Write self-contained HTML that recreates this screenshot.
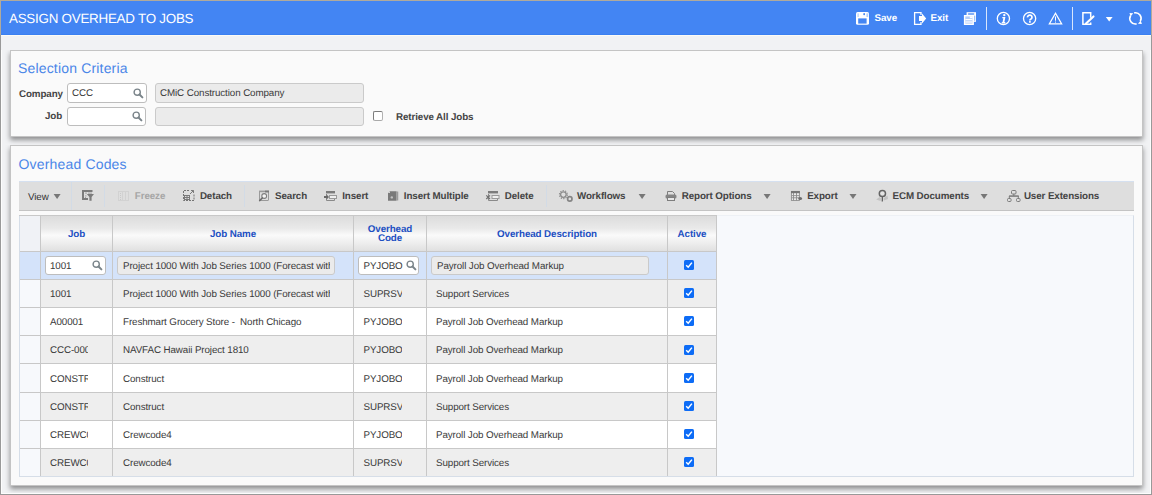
<!DOCTYPE html><html><head><meta charset="utf-8"><style>
*{box-sizing:border-box;margin:0;padding:0}
html,body{width:1152px;height:495px;overflow:hidden}
body{position:relative;background:#f1f2f4;font-family:"Liberation Sans",sans-serif;color:#333;text-rendering:geometricPrecision}
div,span{position:absolute}
.t{white-space:pre;font-size:9.8px;line-height:12px;letter-spacing:-0.1px;color:#3a3a3a}
.b{font-weight:bold;color:#444}
.dis{color:#a6a6a6}
.panel{background:#fafafa;border:1px solid #c4c4c4;box-shadow:0 3px 5px rgba(0,0,0,.42);clip-path:inset(0 -12px -12px -12px)}
.ptitle{white-space:pre;font-size:14px;line-height:16px;color:#4a86e8;letter-spacing:0.17px}
.inp{background:#fff;border:1px solid #bdbdbd;border-radius:3px;overflow:hidden}
.ro{background:#ebebeb;border:1px solid #cacaca;border-radius:3px;overflow:hidden}
.gh{white-space:pre;font-size:9.8px;line-height:10px;font-weight:bold;color:#1d50c2;letter-spacing:-0.1px;text-align:center}
svg{position:absolute;overflow:visible}
.cell{overflow:hidden}
</style></head><body>
<div style="left:0;top:0;width:1152px;height:35px;background:#4385f3;border-bottom:1px solid #3b80f1"></div>
<div style="left:0;top:35px;width:1152px;height:1px;background:#fcfbf6"></div>
<span style="left:9px;top:11px;white-space:pre;font-size:13.4px;line-height:15px;color:#fff;letter-spacing:-0.25px">ASSIGN OVERHEAD TO JOBS</span>
<svg style="left:0;top:0" width="1152" height="35">
<g fill="none" stroke="#ffffff" stroke-width="1.3">
 <!-- exit -->
 <path d="M921 15 V12.6 H914.6 V24.4 H921 V22"/>
 <!-- copy -->
 <rect x="966.6" y="12.2" width="9.4" height="9.6" fill="#ffffff" stroke="none"/>
 <rect x="967.8" y="13.2" width="6.6" height="1.6" rx="0.8" fill="#5d95f4" stroke="none"/>
 <rect x="974.3" y="15.6" width="0.9" height="5.2" fill="#7aa8f6" stroke="none"/>
 <rect x="964.6" y="15.7" width="8.6" height="8.6" fill="#b3cdf9" stroke-width="1.4"/>
 <rect x="969.8" y="16.3" width="2.8" height="1.9" fill="#ffffff" stroke="none"/>
 <line x1="965.4" y1="19.6" x2="972.4" y2="19.6" stroke-width="1.2"/><line x1="965.4" y1="22" x2="972.4" y2="22" stroke-width="1.2"/>
 <!-- info -->
 <circle cx="1003.4" cy="18.5" r="6.1"/>
 <!-- help -->
 <circle cx="1029.6" cy="18.5" r="6.1"/>
 <!-- warning -->
 <path d="M1055.5 13.2 L1061.6 23.8 H1049.4 Z" stroke-linejoin="miter"/>
 <!-- edit -->
 <path d="M1090.7 17.8 V12.7 H1082.9 V24.3 H1090.7 V22.6" stroke-width="1.5"/>
 <path d="M1086 23.6 L1093.5 16.4" stroke-width="2.1" stroke-linecap="round"/>
 <!-- refresh -->
 <path d="M1134.2 12.9 A5.6 5.6 0 0 1 1140.3 21.2 M1136.6 23.9 A5.6 5.6 0 0 1 1130.6 15.6" stroke-width="1.6"/>
</g>
<g fill="#ffffff">
 <rect x="856" y="12.1" width="13" height="12.7" rx="1.6"/>
 <rect x="858.2" y="18.4" width="8.4" height="5.2" fill="#4385f3"/>
 <rect x="857.5" y="13.4" width="1.2" height="3.6" fill="#b4cff9"/>
 <rect x="866.4" y="13.4" width="1.8" height="3.6" fill="#b4cff9"/>
 <rect x="863.3" y="13.1" width="1.7" height="2.2" rx="0.8" fill="#4385f3"/>
 <path d="M919 16 H922 V13.5 L926.2 18.5 L922 23.5 V21 H919 Z"/>
 <path d="M1105.8 17 H1112.6 L1109.2 21.5 Z"/>
 <circle cx="1004.3" cy="15.1" r="1.2"/><path d="M1002.4 17 H1005.4 L1004.4 22.1 H1005.4 L1005.1 23.5 H1001.5 L1001.8 22.2 L1002.6 22.1 L1003.3 18.3 H1002.2 Z"/>
 <path d="M1027.5 17.4 A2.25 2.2 0 1 1 1031 19.1 Q1029.9 19.7 1029.9 20.4" fill="none" stroke="#ffffff" stroke-width="1.75"/><rect x="1029" y="21.1" width="1.8" height="1.6"/>
 <rect x="1055" y="16.5" width="1" height="4.2"/><rect x="1055" y="21.6" width="1" height="1"/>
 <path d="M1129.5 13 L1133.2 13.2 L1130.6 16.4 Z"/>
 <path d="M1141.9 24 L1138 23.8 L1140.7 20.6 Z"/>
</g>
<rect x="986" y="7" width="1" height="23" fill="#d9e6fc"/>
<rect x="1072" y="7" width="1" height="23" fill="#d9e6fc"/>
</svg>
<span class="t b" style="left:874.5px;top:13px;color:#fff">Save</span>
<span class="t b" style="left:930.5px;top:13px;color:#fff">Exit</span>
<div class="panel" style="left:10px;top:50px;width:1133px;height:87px"></div>
<span class="ptitle" style="left:18px;top:60px">Selection Criteria</span>
<span class="t b" style="left:19px;top:89px;">Company</span>
<span class="t b" style="left:45px;top:111px;">Job</span>
<div class="inp" style="left:67px;top:83px;width:80px;height:20px"></div>
<span class="t" style="left:72px;top:88px;">CCC</span>
<svg style="left:132.5px;top:88px" width="11" height="11" viewBox="0 0 11 11"><circle cx="4.2" cy="4.2" r="3.1" fill="none" stroke="#7a848a" stroke-width="1.4"/><path d="M6.5 6.5 L9.4 9.4" stroke="#7a848a" stroke-width="2" stroke-linecap="round"/></svg>
<div class="inp" style="left:67px;top:107px;width:79px;height:19px"></div>
<svg style="left:131.5px;top:111px" width="11" height="11" viewBox="0 0 11 11"><circle cx="4.2" cy="4.2" r="3.1" fill="none" stroke="#7a848a" stroke-width="1.4"/><path d="M6.5 6.5 L9.4 9.4" stroke="#7a848a" stroke-width="2" stroke-linecap="round"/></svg>
<div class="ro" style="left:155px;top:83px;width:209px;height:20px"></div>
<span class="t" style="left:160px;top:88px;">CMiC Construction Company</span>
<div class="ro" style="left:155px;top:107px;width:209px;height:19px"></div>
<div style="left:373px;top:111px;width:10px;height:10px;border:1px solid #7c7c7c;border-right-color:#b2b2b2;border-bottom-color:#aaaaaa;border-radius:2px;background:#fff"></div>
<span class="t b" style="left:396px;top:112px;">Retrieve All Jobs</span>
<div class="panel" style="left:10px;top:145px;width:1133px;height:341px"></div>
<span class="ptitle" style="left:18.5px;top:156px">Overhead Codes</span>
<div style="left:19px;top:181px;width:1115px;height:30px;background:#dedede;border-top:1px solid #d5e0f0;border-bottom:1px solid #c4c4c4"></div>
<div style="left:71px;top:182px;width:1px;height:28px;background:#d2dbe6"></div>
<div style="left:104px;top:185px;width:1px;height:22px;background:#d2dbe6"></div>
<div style="left:244px;top:185px;width:1px;height:22px;background:#d2dbe6"></div>
<div style="left:546px;top:185px;width:1px;height:22px;background:#d2dbe6"></div>
<span class="t" style="left:28px;top:192px;color:#333">View</span>
<svg style="left:0;top:0" width="1152" height="495">
<path d="M53.6 194 H60.6 L57.1 199 Z" fill="#777"/><path d="M638.6 194 H645.6 L642.1 199 Z" fill="#777"/><path d="M763.6 194 H770.6 L767.1 199 Z" fill="#777"/><path d="M849.5 194 H856.5 L853.0 199 Z" fill="#777"/><path d="M980.6 194 H987.6 L984.1 199 Z" fill="#777"/>
<!-- filter -->
<g fill="#7c7c7c"><rect x="82" y="190" width="10.5" height="2"/><rect x="82" y="190" width="2" height="10"/><rect x="82" y="198" width="6" height="2"/>
<path d="M86.8 194 H94 L91.6 197 V200.8 H89.4 V197 Z"/></g>
<g fill="#a2a2a2"><rect x="85" y="192.6" width="2" height="1"/><rect x="88" y="192.6" width="4" height="1"/><rect x="85" y="195.4" width="1.5" height="1"/><rect x="85" y="197" width="1" height="1"/></g>
<!-- freeze (disabled) -->
<g fill="none" stroke="#d2d2d2" stroke-width="1"><rect x="118.5" y="191.5" width="10" height="9"/><line x1="122.5" y1="192" x2="122.5" y2="200"/><line x1="125.5" y1="192" x2="125.5" y2="200"/></g>
<g fill="none" stroke="#cacaca" stroke-width="1" stroke-dasharray="1 1"><line x1="120.5" y1="193" x2="120.5" y2="200"/></g>
<!-- detach -->
<g fill="none" stroke="#757575" stroke-width="1" stroke-dasharray="2 1"><path d="M183.5 193 V190.5 H189"/><path d="M183.5 194 V200.5 H194 V194"/></g>
<g fill="none" stroke="#7a7a7a" stroke-width="1"><rect x="184.5" y="195.5" width="5" height="4"/><line x1="187" y1="195.5" x2="187" y2="199.5"/><line x1="184.5" y1="197.5" x2="189.5" y2="197.5"/><path d="M190 194 L193.5 190.5 M191 190.5 H193.5 V193"/></g>
<!-- search -->
<g fill="none" stroke="#9a9a9a" stroke-width="1"><rect x="259.5" y="191.5" width="9" height="9" rx="0.5"/></g>
<rect x="259" y="190.6" width="10" height="1.6" fill="#9a9a9a"/><rect x="265" y="190.6" width="4" height="1.8" fill="#7a7a7a"/>
<circle cx="264.2" cy="196" r="2.4" fill="#f4f4f4" stroke="#7e7e7e" stroke-width="1.1"/>
<path d="M262.4 197.9 L259.6 200.6" stroke="#6e6e6e" stroke-width="1.5" stroke-linecap="round"/>
<!-- insert -->
<rect x="326" y="191" width="9" height="2.4" fill="#7c7c7c"/>
<g fill="none" stroke="#8a8a8a" stroke-width="1"><path d="M326.5 194 V200.5 H334.5 V198.5"/></g>
<rect x="329.5" y="195.5" width="7" height="3" fill="#efefef" stroke="#9a9a9a" stroke-width="1"/>
<path d="M324 196 H326.6 V194.6 L329 197 L326.6 199.4 V198 H324 Z" fill="#6a6a6a"/>
<!-- insert multiple -->
<path d="M389.8 191.2 H396.6 V200.8 H388 V193 Z" fill="#7a7a7a"/>
<path d="M388 193 L389.8 191.2 V193 Z" fill="#e8e8e8"/>
<rect x="397.2" y="191.5" width="1" height="9" fill="#8a8a8a"/>
<circle cx="391.8" cy="197.4" r="1.2" fill="#c4c4c4"/>
<!-- delete -->
<rect x="488" y="191" width="10" height="2.4" fill="#7c7c7c"/>
<g fill="none" stroke="#8a8a8a" stroke-width="1"><path d="M488.5 194 V200.5 H497.5 V198.5"/></g>
<rect x="492" y="195.5" width="7" height="3" fill="#efefef" stroke="#9a9a9a" stroke-width="1"/>
<path d="M486.3 195.3 L490 199 M490 195.3 L486.3 199" stroke="#707070" stroke-width="1.2"/>
<!-- workflows -->
<g fill="none" stroke="#8c8c8c"><circle cx="563.4" cy="194.6" r="2.8" stroke-width="1.3"/><circle cx="563.4" cy="194.6" r="4" stroke-width="1.1" stroke-dasharray="1.3 1.2"/></g>
<circle cx="569.8" cy="198.9" r="2.2" fill="none" stroke="#858585" stroke-width="1.7"/>
<!-- print -->
<g fill="none" stroke="#7e7e7e" stroke-width="1"><path d="M667.5 195 V191.5 H672.5 L674.5 193.5 V195"/></g>
<rect x="665.5" y="194.5" width="11" height="4" rx="1.5" fill="#858585"/>
<rect x="667.5" y="197.5" width="7" height="3" fill="#e6e6e6" stroke="#7e7e7e" stroke-width="1"/>
<!-- export -->
<rect x="791" y="191" width="8.8" height="9.8" fill="#ececec"/>
<g fill="none" stroke="#8c8c8c" stroke-width="0.9"><rect x="791.4" y="191.4" width="8" height="9"/><line x1="793.5" y1="192" x2="793.5" y2="200.5"/><line x1="796.5" y1="192" x2="796.5" y2="200.5"/><line x1="791.5" y1="195.6" x2="799.5" y2="195.6"/><line x1="791.5" y1="197.8" x2="799.5" y2="197.8"/></g>
<rect x="791" y="191" width="8.8" height="2.2" fill="#767676"/>
<ellipse cx="800.2" cy="198.6" rx="1.9" ry="1.5" fill="#6c6c6c"/>
<!-- ECM -->
<g fill="#c2c2c2"><path d="M876.2 199.6 L879.6 197 L881 198.4 L880.6 201 Z"/><path d="M883.6 198.2 L887.6 195.6 L888 199 L883.8 200.6 Z"/></g>
<circle cx="882.4" cy="193.5" r="3.1" fill="#e4e4e4" stroke="#646464" stroke-width="1.5"/>
<line x1="882.4" y1="196.6" x2="882.3" y2="201.6" stroke="#646464" stroke-width="1.3"/>
<!-- user extensions -->
<g fill="none" stroke="#7c7c7c" stroke-width="1"><rect x="1011.5" y="190.5" width="4.5" height="3.5" rx="1"/><line x1="1013.8" y1="194" x2="1013.8" y2="196"/><path d="M1009.3 198.5 V196 H1018.3 V198.5"/><rect x="1007.5" y="198.5" width="3.6" height="3" rx="1"/><rect x="1016.5" y="198.5" width="3.6" height="3" rx="1"/></g>
<rect x="1009" y="195.6" width="10" height="1.1" fill="#7c7c7c"/>
</svg>
<span class="t b dis" style="left:134.8px;top:191px;">Freeze</span>
<span class="t b" style="left:199.9px;top:191px;">Detach</span>
<span class="t b" style="left:275px;top:191px;">Search</span>
<span class="t b" style="left:342.2px;top:191px;">Insert</span>
<span class="t b" style="left:403.8px;top:191px;">Insert Multiple</span>
<span class="t b" style="left:504.8px;top:191px;">Delete</span>
<span class="t b" style="left:577px;top:191px;">Workflows</span>
<span class="t b" style="left:681.7px;top:191px;">Report Options</span>
<span class="t b" style="left:807.2px;top:191px;">Export</span>
<span class="t b" style="left:892.5px;top:191px;">ECM Documents</span>
<span class="t b" style="left:1023.9px;top:191px;">User Extensions</span>
<div style="left:19px;top:215px;width:1115px;height:262px;background:#f7f9fc;border:1px solid #d6dee8;border-top-color:#eef1f5"></div>
<div style="left:19px;top:215px;width:698px;height:1px;background:#c8c8c8"></div>
<div style="left:20px;top:216px;width:20px;height:260px;background:#f0f2f6"></div>
<div style="left:41px;top:216px;width:675px;height:35px;background:linear-gradient(#dcdcdc,#e9e9e9 35%,#fafafa 55%,#efefef 75%,#e0e0e0)"></div>
<div style="left:20px;top:252px;width:20px;height:27px;background:#d4e3fa"></div>
<div style="left:41px;top:252px;width:675px;height:27px;background:#d4e3fa"></div>
<div style="left:20px;top:279px;width:696px;height:1px;background:#c8c8c8"></div>
<div style="left:20px;top:280px;width:20px;height:27px;background:#f7f9fc"></div>
<div style="left:41px;top:280px;width:675px;height:27px;background:#eeeeee"></div>
<div style="left:20px;top:307px;width:696px;height:1px;background:#c8c8c8"></div>
<div style="left:20px;top:308px;width:20px;height:27px;background:#f7f9fc"></div>
<div style="left:41px;top:308px;width:675px;height:27px;background:#ffffff"></div>
<div style="left:20px;top:335px;width:696px;height:1px;background:#c8c8c8"></div>
<div style="left:20px;top:336px;width:20px;height:27px;background:#f7f9fc"></div>
<div style="left:41px;top:336px;width:675px;height:27px;background:#eeeeee"></div>
<div style="left:20px;top:363px;width:696px;height:1px;background:#c8c8c8"></div>
<div style="left:20px;top:364px;width:20px;height:28px;background:#f7f9fc"></div>
<div style="left:41px;top:364px;width:675px;height:28px;background:#ffffff"></div>
<div style="left:20px;top:392px;width:696px;height:1px;background:#c8c8c8"></div>
<div style="left:20px;top:393px;width:20px;height:27px;background:#f7f9fc"></div>
<div style="left:41px;top:393px;width:675px;height:27px;background:#eeeeee"></div>
<div style="left:20px;top:420px;width:696px;height:1px;background:#c8c8c8"></div>
<div style="left:20px;top:421px;width:20px;height:27px;background:#f7f9fc"></div>
<div style="left:41px;top:421px;width:675px;height:27px;background:#ffffff"></div>
<div style="left:20px;top:448px;width:696px;height:1px;background:#c8c8c8"></div>
<div style="left:20px;top:449px;width:20px;height:27px;background:#f7f9fc"></div>
<div style="left:41px;top:449px;width:675px;height:27px;background:#eeeeee"></div>
<div style="left:20px;top:251px;width:696px;height:1px;background:#c8c8c8"></div>
<div style="left:40px;top:216px;width:1px;height:260px;background:#c8c8c8"></div>
<div style="left:112px;top:216px;width:1px;height:260px;background:#c8c8c8"></div>
<div style="left:353px;top:216px;width:1px;height:260px;background:#c8c8c8"></div>
<div style="left:426px;top:216px;width:1px;height:260px;background:#c8c8c8"></div>
<div style="left:667px;top:216px;width:1px;height:260px;background:#c8c8c8"></div>
<div style="left:716px;top:216px;width:1px;height:260px;background:#c8c8c8"></div>
<span class="gh" style="left:41px;width:71px;top:230px">Job</span>
<span class="gh" style="left:113px;width:240px;top:230px">Job Name</span>
<span class="gh" style="left:354px;width:72px;top:225px">Overhead</span>
<span class="gh" style="left:354px;width:72px;top:234px">Code</span>
<span class="gh" style="left:427px;width:240px;top:230px">Overhead Description</span>
<span class="gh" style="left:668px;width:48px;top:230px">Active</span>
<div class="inp" style="left:45px;top:256px;width:61px;height:19px"><span class="t" style="left:4px;top:4px">1001</span></div>
<svg style="left:92.4px;top:260px" width="11" height="11" viewBox="0 0 11 11"><circle cx="4.2" cy="4.2" r="3.1" fill="none" stroke="#7a848a" stroke-width="1.4"/><path d="M6.5 6.5 L9.4 9.4" stroke="#7a848a" stroke-width="2" stroke-linecap="round"/></svg>
<div class="ro" style="left:117px;top:256px;width:218px;height:19px"><div class="cell" style="left:0;top:0;width:212px;height:17px"><span class="t" style="left:5px;top:4px">Project 1000 With Job Series 1000 (Forecast with</span></div></div>
<div class="inp" style="left:358px;top:256px;width:61px;height:19px"><div class="cell" style="left:0;top:0;width:48px;height:17px"><span class="t" style="left:4.5px;top:4px">PYJOBO</span></div></div>
<svg style="left:405.7px;top:260px" width="11" height="11" viewBox="0 0 11 11"><circle cx="4.2" cy="4.2" r="3.1" fill="none" stroke="#7a848a" stroke-width="1.4"/><path d="M6.5 6.5 L9.4 9.4" stroke="#7a848a" stroke-width="2" stroke-linecap="round"/></svg>
<div class="ro" style="left:431px;top:256px;width:218px;height:19px"><span class="t" style="left:5px;top:4px">Payroll Job Overhead Markup</span></div>
<svg style="left:684px;top:260.0px" width="10" height="10" viewBox="0 0 10 10"><rect x="0" y="0" width="10" height="10" rx="1.5" fill="#0d6cf6"/><path d="M2.2 5.2 L4.2 7.2 L7.9 2.6" fill="none" stroke="#fff" stroke-width="1.5"/></svg>
<div class="cell" style="left:41px;top:280px;width:47px;height:26px"><span class="t" style="left:9px;top:9px">1001</span></div>
<div class="cell" style="left:113px;top:280px;width:217px;height:26px"><span class="t" style="left:10px;top:9px">Project 1000 With Job Series 1000 (Forecast with</span></div>
<div class="cell" style="left:354px;top:280px;width:48px;height:26px"><span class="t" style="left:9.5px;top:9px">SUPRSV</span></div>
<span class="t" style="left:436px;top:289px">Support Services</span>
<svg style="left:684px;top:288.2px" width="10" height="10" viewBox="0 0 10 10"><rect x="0" y="0" width="10" height="10" rx="1.5" fill="#0d6cf6"/><path d="M2.2 5.2 L4.2 7.2 L7.9 2.6" fill="none" stroke="#fff" stroke-width="1.5"/></svg>
<div class="cell" style="left:41px;top:308px;width:47px;height:26px"><span class="t" style="left:9px;top:9px">A00001</span></div>
<div class="cell" style="left:113px;top:308px;width:217px;height:26px"><span class="t" style="left:10px;top:9px">Freshmart Grocery Store -  North Chicago</span></div>
<div class="cell" style="left:354px;top:308px;width:48px;height:26px"><span class="t" style="left:9.5px;top:9px">PYJOBO</span></div>
<span class="t" style="left:436px;top:317px">Payroll Job Overhead Markup</span>
<svg style="left:684px;top:316.4px" width="10" height="10" viewBox="0 0 10 10"><rect x="0" y="0" width="10" height="10" rx="1.5" fill="#0d6cf6"/><path d="M2.2 5.2 L4.2 7.2 L7.9 2.6" fill="none" stroke="#fff" stroke-width="1.5"/></svg>
<div class="cell" style="left:41px;top:336px;width:47px;height:26px"><span class="t" style="left:9px;top:9px">CCC-000</span></div>
<div class="cell" style="left:113px;top:336px;width:217px;height:26px"><span class="t" style="left:10px;top:9px">NAVFAC Hawaii Project 1810</span></div>
<div class="cell" style="left:354px;top:336px;width:48px;height:26px"><span class="t" style="left:9.5px;top:9px">PYJOBO</span></div>
<span class="t" style="left:436px;top:345px">Payroll Job Overhead Markup</span>
<svg style="left:684px;top:344.6px" width="10" height="10" viewBox="0 0 10 10"><rect x="0" y="0" width="10" height="10" rx="1.5" fill="#0d6cf6"/><path d="M2.2 5.2 L4.2 7.2 L7.9 2.6" fill="none" stroke="#fff" stroke-width="1.5"/></svg>
<div class="cell" style="left:41px;top:364px;width:47px;height:26px"><span class="t" style="left:9px;top:10px">CONSTR</span></div>
<div class="cell" style="left:113px;top:364px;width:217px;height:26px"><span class="t" style="left:10px;top:10px">Construct</span></div>
<div class="cell" style="left:354px;top:364px;width:48px;height:26px"><span class="t" style="left:9.5px;top:10px">PYJOBO</span></div>
<span class="t" style="left:436px;top:374px">Payroll Job Overhead Markup</span>
<svg style="left:684px;top:372.8px" width="10" height="10" viewBox="0 0 10 10"><rect x="0" y="0" width="10" height="10" rx="1.5" fill="#0d6cf6"/><path d="M2.2 5.2 L4.2 7.2 L7.9 2.6" fill="none" stroke="#fff" stroke-width="1.5"/></svg>
<div class="cell" style="left:41px;top:393px;width:47px;height:26px"><span class="t" style="left:9px;top:9px">CONSTR</span></div>
<div class="cell" style="left:113px;top:393px;width:217px;height:26px"><span class="t" style="left:10px;top:9px">Construct</span></div>
<div class="cell" style="left:354px;top:393px;width:48px;height:26px"><span class="t" style="left:9.5px;top:9px">SUPRSV</span></div>
<span class="t" style="left:436px;top:402px">Support Services</span>
<svg style="left:684px;top:401.0px" width="10" height="10" viewBox="0 0 10 10"><rect x="0" y="0" width="10" height="10" rx="1.5" fill="#0d6cf6"/><path d="M2.2 5.2 L4.2 7.2 L7.9 2.6" fill="none" stroke="#fff" stroke-width="1.5"/></svg>
<div class="cell" style="left:41px;top:421px;width:47px;height:26px"><span class="t" style="left:9px;top:9px">CREWC0</span></div>
<div class="cell" style="left:113px;top:421px;width:217px;height:26px"><span class="t" style="left:10px;top:9px">Crewcode4</span></div>
<div class="cell" style="left:354px;top:421px;width:48px;height:26px"><span class="t" style="left:9.5px;top:9px">PYJOBO</span></div>
<span class="t" style="left:436px;top:430px">Payroll Job Overhead Markup</span>
<svg style="left:684px;top:429.2px" width="10" height="10" viewBox="0 0 10 10"><rect x="0" y="0" width="10" height="10" rx="1.5" fill="#0d6cf6"/><path d="M2.2 5.2 L4.2 7.2 L7.9 2.6" fill="none" stroke="#fff" stroke-width="1.5"/></svg>
<div class="cell" style="left:41px;top:449px;width:47px;height:26px"><span class="t" style="left:9px;top:9px">CREWC0</span></div>
<div class="cell" style="left:113px;top:449px;width:217px;height:26px"><span class="t" style="left:10px;top:9px">Crewcode4</span></div>
<div class="cell" style="left:354px;top:449px;width:48px;height:26px"><span class="t" style="left:9.5px;top:9px">SUPRSV</span></div>
<span class="t" style="left:436px;top:458px">Support Services</span>
<svg style="left:684px;top:457.4px" width="10" height="10" viewBox="0 0 10 10"><rect x="0" y="0" width="10" height="10" rx="1.5" fill="#0d6cf6"/><path d="M2.2 5.2 L4.2 7.2 L7.9 2.6" fill="none" stroke="#fff" stroke-width="1.5"/></svg>
<div style="left:1px;top:50px;width:1px;height:444px;background:#fdfdfd"></div>
<div style="left:1px;top:493px;width:1150px;height:1px;background:#fdfdfd"></div>
<div style="left:1150px;top:50px;width:1px;height:444px;background:#fdfdfd"></div>
<div style="left:0;top:0;width:1152px;height:495px;border:1px solid #999;border-top-color:#b0aa9c"></div>
<div style="left:1151px;top:0;width:1px;height:35px;background:#b0aa9c"></div>
<div style="left:0;top:0;width:1px;height:35px;background:#b0aa9c"></div>
</body></html>
